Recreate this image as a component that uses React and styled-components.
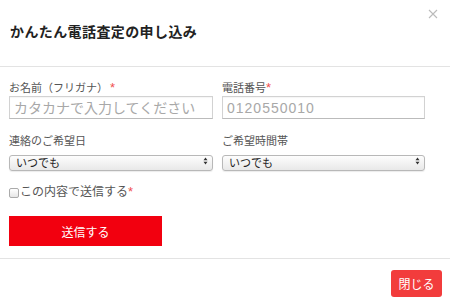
import React from 'react';
import styled, { createGlobalStyle } from 'styled-components';

const GlobalStyle = createGlobalStyle`
    html, body {
        margin: 0;
        padding: 0;
        background: #fff;
    }
    body {
        font-family: 'Liberation Sans', 'Noto Sans CJK JP', sans-serif;
    }
`;

const Modal = styled.div`
    position: relative;
    width: 450px;
    height: 303px;
    background: #fff;
    overflow: hidden;
`;

const Header = styled.div`
    height: 67px;
    box-sizing: border-box;
    padding: 22px 10px 0;
    border-bottom: 1px solid #e3e3e3;
`;

const Title = styled.h1`
    margin: 0;
    font-size: 14px;
    line-height: 20px;
    font-weight: bold;
    color: #222;
    letter-spacing: 0.4px;
`;

const CloseX = styled.button`
    position: absolute;
    top: 7px;
    right: 10px;
    width: 14px;
    height: 14px;
    padding: 0;
    border: 0;
    background: none;
    display: flex;
    align-items: center;
    justify-content: center;
`;

const Body = styled.div`
    padding: 14px 0 12px 9px;
    border-bottom: 1px solid #e3e3e3;
`;

const Grid = styled.div`
    display: grid;
    grid-template-columns: 204px 203px;
    column-gap: 9px;
    row-gap: 16px;
`;

const Field = styled.div`
    display: flex;
    flex-direction: column;
`;

const Label = styled.label`
    font-size: 11px;
    line-height: 13px;
    color: #555;
    margin-bottom: ${(props) => (props.tight ? '5px' : '1px')};
`;

const Req = styled.span`
    color: #f05050;
    font-size: 13px;
    margin-left: ${(props) => (props.spaced ? '2px' : '0')};
`;

const Input = styled.input`
    box-sizing: border-box;
    width: 100%;
    height: 23px;
    margin: 0;
    padding: 0 4px;
    border: 1px solid #d2d2d2;
    border-bottom-color: #bbb;
    box-shadow: inset 0 1px 1px rgba(0, 0, 0, 0.04);
    font-family: inherit;
    font-size: 14px;
    color: #999;
    outline: none;
    &::placeholder {
        color: #a8a8a8;
        letter-spacing: ${(props) => (props.wide ? '1px' : '0')};
    }
`;

const SelectWrap = styled.div`
    position: relative;
    height: 16px;
`;

const Select = styled.select`
    appearance: none;
    box-sizing: border-box;
    width: 100%;
    height: 16px;
    margin: 0;
    padding: 0 0 0 6px;
    border: 1px solid #b8b8b8;
    border-radius: 3px;
    background: linear-gradient(#fdfdfd, #e8e8e8);
    box-shadow: 0 1px 1px rgba(0, 0, 0, 0.08);
    font-family: inherit;
    font-size: 11px;
    line-height: 14px;
    color: #222;
    outline: none;
`;

const Arrows = styled.svg`
    position: absolute;
    right: 5px;
    top: 4px;
    pointer-events: none;
`;

const CheckRow = styled.label`
    display: flex;
    align-items: center;
    margin-top: 15px;
    font-size: 12px;
    line-height: 16px;
    color: #555;
`;

const Box = styled.span`
    box-sizing: border-box;
    width: 10px;
    height: 10px;
    margin: 1px 1px 0 0;
    border: 1px solid #aaa;
    border-radius: 2px;
    background: linear-gradient(#fff, #e6e6e6);
`;

const Submit = styled.button`
    display: block;
    width: 153px;
    height: 30px;
    margin-top: 16px;
    padding: 0;
    border: 0;
    background: #f2000f;
    color: #fff;
    font-family: inherit;
    font-size: 12px;
`;

const Footer = styled.div`
    display: flex;
    justify-content: flex-end;
    padding: 11px 8px 0 0;
`;

const CloseButton = styled.button`
    width: 51px;
    height: 27px;
    padding: 0;
    border: 0;
    border-radius: 3px;
    background: #f23c3c;
    color: #fff;
    font-family: inherit;
    font-size: 12px;
`;

function SelectBox() {
    return (
        <SelectWrap>
            <Select defaultValue='any'>
                <option value='any'>いつでも</option>
            </Select>
            <Arrows width='5' height='8' viewBox='0 0 5 8'>
                <path d='M0.5 3.2 L2.5 0.6 L4.5 3.2 Z M0.5 4.8 L2.5 7.4 L4.5 4.8 Z' fill='#333' />
            </Arrows>
        </SelectWrap>
    );
}

function App() {
    return (
        <>
            <GlobalStyle />
            <Modal>
                <Header>
                    <Title>かんたん電話査定の申し込み</Title>
                </Header>
                <CloseX aria-label='close'>
                    <svg width='10' height='10' viewBox='0 0 10 10'>
                        <path d='M1 1 L9 9 M9 1 L1 9' stroke='#bbb' strokeWidth='1.1' />
                    </svg>
                </CloseX>
                <Body>
                    <Grid>
                        <Field>
                            <Label>
                                お名前（フリガナ）<Req spaced>*</Req>
                            </Label>
                            <Input placeholder='カタカナで入力してください' />
                        </Field>
                        <Field>
                            <Label>
                                電話番号<Req>*</Req>
                            </Label>
                            <Input wide placeholder='0120550010' />
                        </Field>
                        <Field>
                            <Label tight>連絡のご希望日</Label>
                            <SelectBox />
                        </Field>
                        <Field>
                            <Label tight>ご希望時間帯</Label>
                            <SelectBox />
                        </Field>
                    </Grid>
                    <CheckRow>
                        <Box />
                        この内容で送信する<Req>*</Req>
                    </CheckRow>
                    <Submit>送信する</Submit>
                </Body>
                <Footer>
                    <CloseButton>閉じる</CloseButton>
                </Footer>
            </Modal>
        </>
    );
}

export default App;
